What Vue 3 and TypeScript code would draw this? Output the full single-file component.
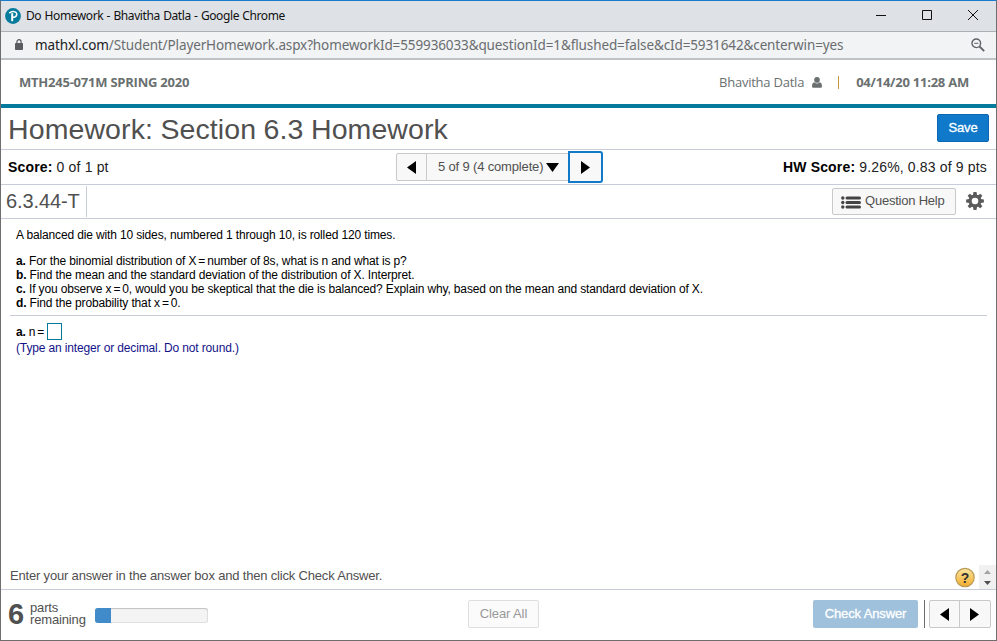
<script setup lang="ts">
import { ref } from 'vue'

interface QuestionPart {
  label: string
  text: string
}

const address = {
  host: 'mathxl.com',
  path: '/Student/PlayerHomework.aspx?homeworkId=559936033&questionId=1&flushed=false&cId=5931642&centerwin=yes',
}

const parts: QuestionPart[] = [
  { label: 'a.', text: 'For the binomial distribution of X = number of 8s, what is n and what is p?' },
  { label: 'b.', text: 'Find the mean and the standard deviation of the distribution of X. Interpret.' },
  { label: 'c.', text: 'If you observe x = 0, would you be skeptical that the die is balanced? Explain why, based on the mean and standard deviation of X.' },
  { label: 'd.', text: 'Find the probability that x = 0.' },
]

// Splits a sentence around " = " so the equals sign can be set tighter.
const segments = (text: string): string[] => text.split(/( = )/)

const answer = ref('')
const progress = 14
const teeth = [0, 45, 90, 135, 180, 225, 270, 315]
</script>

<template>
  <div class="window">
    <header class="titlebar">
      <svg class="logo" viewBox="0 0 16 16">
        <circle cx="8" cy="8" r="7.900" fill="#047a9c" />
        <path d="M4.300 5.200C5.700 3.900 7.700 3.300 9.300 3.700c1.900.400 2.700 1.700 2.400 3.100-.400 1.800-2.200 2.600-4.500 2.500" fill="none" stroke="#fff" stroke-width="1.600" />
        <path d="M7.200 5.200v8" stroke="#fff" stroke-width="2" />
      </svg>
      <span class="caption">Do Homework - Bhavitha Datla - Google Chrome</span>
      <div class="controls">
        <svg viewBox="0 0 12 12"><path d="M1 6.500h10" /></svg>
        <svg viewBox="0 0 12 12"><path d="M1.500 1.500h9v9h-9z" /></svg>
        <svg viewBox="0 0 12 12"><path d="M1 1l10 10M11 1L1 11" /></svg>
      </div>
    </header>

    <div class="address">
      <svg class="lock" viewBox="0 0 8 11">
        <path d="M1.900 5V2.800a2.100 2.100 0 0 1 4.200 0V5" fill="none" stroke="#5a5d60" stroke-width="1.200" />
        <rect x="0" y="4" width="8" height="7" rx="0.800" fill="#5a5d60" />
      </svg>
      <span class="url"><b>{{ address.host }}</b>{{ address.path }}</span>
      <svg class="lens" viewBox="0 0 14 14" fill="none" stroke="#5f6368">
        <circle cx="5.300" cy="5.300" r="4.300" stroke-width="1.400" />
        <path d="M8.500 8.500l4.700 4.700" stroke-width="1.800" />
        <path d="M3.200 5.300h4.200" stroke-width="1" />
      </svg>
    </div>

    <div class="course">
      <strong class="course-name">MTH245-071M SPRING 2020</strong>
      <span class="user">Bhavitha Datla</span>
      <svg class="person" viewBox="0 0 10 11">
        <circle cx="5" cy="2.900" r="2.800" />
        <path d="M0 9.500C0 7 .7 5.600 2.300 5.200a3.900 3.900 0 0 0 5.400 0C9.300 5.600 10 7 10 9.500q0 1.300-1.300 1.300H1.300Q0 10.800 0 9.500z" />
      </svg>
      <i class="divider"></i>
      <strong class="date">04/14/20 11:28 AM</strong>
    </div>

    <div class="heading">
      <h1>Homework: Section 6.3 Homework</h1>
      <button class="save">Save</button>
    </div>

    <div class="score">
      <span class="score-left"><b>Score:</b> 0 of 1 pt</span>
      <div class="pager">
        <button class="prev"><svg viewBox="0 0 9 13"><path d="M9 0v13L0 6.500z" /></svg></button>
        <button class="pick"><span>5 of 9 (4 complete)</span><svg viewBox="0 0 13 9"><path d="M0 0h13L6.500 9z" /></svg></button>
        <button class="next"><svg viewBox="0 0 9 13"><path d="M0 0v13l9-6.500z" /></svg></button>
      </div>
      <span class="score-right"><b>HW Score:</b> 9.26%, 0.83 of 9 pts</span>
    </div>

    <div class="toolbar">
      <span class="number">6.3.44-T</span>
      <button class="help">
        <svg viewBox="0 0 20 13" fill="#444">
          <g v-for="y in [2, 6.5, 11]" :key="y">
            <circle cx="1.800" :cy="y" r="1.700" />
            <rect x="4.500" :y="y - 1.600" width="15.500" height="3.200" rx="1.500" />
          </g>
        </svg>
        <span>Question Help</span>
      </button>
      <svg class="gear" viewBox="-9 -9 18 18">
        <path v-for="angle in teeth" :key="angle" :transform="`rotate(${angle})`" d="M-2.100-5.500L-1.500-8.900H1.500L2.100-5.500z" fill="#5b5b5b" />
        <circle r="4.900" fill="none" stroke="#5b5b5b" stroke-width="3.200" />
      </svg>
    </div>

    <main class="question">
      <p class="intro">A balanced die with 10 sides, numbered 1 through 10, is rolled 120 times.</p>
      <p v-for="part in parts" :key="part.label"><b>{{ part.label }}</b> <span v-for="(segment, i) in segments(part.text)" :key="i" :class="{ equals: segment === ' = ' }">{{ segment }}</span></p>
      <hr />
      <label class="entry"><b>a.</b><span>n<span class="equals"> =</span></span><input v-model="answer" /></label>
      <p class="note">(Type an integer or decimal. Do not round.)</p>
    </main>

    <div class="hint">
      <span>Enter your answer in the answer box and then click Check Answer.</span>
      <svg class="qmark" viewBox="0 0 20 21">
        <defs>
          <linearGradient id="gold" x1="0" y1="0" x2="0" y2="1">
            <stop offset="0" stop-color="#fbe7a0" />
            <stop offset="1" stop-color="#f2ac2c" />
          </linearGradient>
        </defs>
        <circle cx="10" cy="10.500" r="9.200" fill="url(#gold)" stroke="#b99a55" stroke-width="1.200" />
        <text x="10" y="15.500" text-anchor="middle">?</text>
      </svg>
      <div class="scroll">
        <svg viewBox="0 0 7 4"><path d="M0 4h7L3.500 0z" fill="#a3a3a3" /></svg>
        <svg viewBox="0 0 7 4"><path d="M0 0h7L3.500 4z" fill="#505050" /></svg>
      </div>
    </div>

    <footer class="footer">
      <strong class="count">6</strong>
      <span class="remaining">parts<br />remaining</span>
      <div class="progress"><div :style="{ width: progress + '%' }"></div></div>
      <button class="clear">Clear All</button>
      <button class="check">Check Answer</button>
      <i class="bar"></i>
      <div class="steps">
        <button><svg viewBox="0 0 9 13"><path d="M9 0v13L0 6.500z" /></svg></button>
        <button><svg viewBox="0 0 9 13"><path d="M0 0v13l9-6.500z" /></svg></button>
      </div>
    </footer>
  </div>
</template>

<style>
body {
  margin: 0;
  background: #fff;
}
</style>

<style scoped>
* {
  box-sizing: border-box;
}
.window {
  width: 997px;
  height: 641px;
  display: flex;
  flex-direction: column;
  border: 1px solid #6e6e6e;
  border-top-color: #1a7bcd;
  background: #fff;
  font-family: "Liberation Sans", Arial, sans-serif;
  white-space: nowrap;
  overflow: hidden;
}
button {
  display: flex;
  align-items: center;
  justify-content: center;
  padding: 0 0 1px;
  border: 1px solid #c9c9c9;
  background: #f8f8f8;
  font-family: inherit;
  font-size: 13px;
  letter-spacing: -0.12px;
}
svg {
  display: block;
  flex: none;
}
.titlebar {
  height: 31px;
  flex: none;
  display: flex;
  align-items: center;
  padding: 0 17px 0 4px;
  background: #dee1e6;
  border-bottom: 1px solid #adb0b3;
}
.logo {
  width: 16px;
  height: 16px;
  margin-bottom: 1px;
}
.caption {
  margin-left: 5px;
  font: 12px/20px "Noto Sans", sans-serif;
  letter-spacing: -0.4px;
  word-spacing: 0.6px;
  color: #111;
}
.controls {
  margin-left: auto;
  padding-bottom: 2px;
  display: flex;
  gap: 34px;
}
.controls svg {
  width: 12px;
  height: 12px;
  fill: none;
  stroke: #111;
}
.address {
  height: 28px;
  flex: none;
  display: flex;
  align-items: center;
  padding: 0 11px 0 14px;
  background: #f1f3f4;
  border-bottom: 2px solid #bfc1c3;
}
.lock {
  width: 8px;
  height: 11px;
  margin-bottom: 1px;
}
.url {
  margin-left: 12px;
  font: 13.5px/20px "Noto Sans", sans-serif;
  letter-spacing: -0.117px;
  color: #6a6d70;
}
.url b {
  font-weight: 400;
  color: #202124;
}
.lens {
  width: 14px;
  height: 14px;
  margin-left: auto;
}
.course {
  height: 48px;
  flex: none;
  display: flex;
  align-items: center;
  padding: 0 27px 0 18px;
  border-bottom: 4px solid #047a9c;
  font: 13px/20px "Open Sans", sans-serif;
  letter-spacing: -0.23px;
  color: #6a7070;
}
.user {
  margin-left: auto;
}
.person {
  width: 10px;
  height: 11px;
  margin-left: 8px;
  fill: #6a7070;
}
.divider {
  width: 1px;
  height: 13px;
  margin: 0 17px 0 16px;
  background: #c8963c;
}
.heading {
  height: 42px;
  flex: none;
  display: flex;
  align-items: center;
  justify-content: space-between;
  padding: 0 7px 2px;
  border-bottom: 1px solid #c8ccd8;
}
h1 {
  margin: 2px 0 0;
  font-size: 28.5px;
  line-height: 40px;
  letter-spacing: 0.1px;
  word-spacing: -0.6px;
  font-weight: 400;
  color: #505050;
}
.save {
  width: 52px;
  height: 28px;
  border-color: #0c67b0;
  border-radius: 2px;
  background: #1179ca;
  color: #fff;
  -webkit-text-stroke: 0.3px #fff;
}
.score {
  height: 35px;
  flex: none;
  display: grid;
  grid-template-columns: 395px 207px 1fr;
  align-items: center;
  padding: 0 9px 0 0;
  border-bottom: 1px solid #c8ccd8;
  font-size: 14px;
  letter-spacing: 0.16px;
  color: #222;
}
.score b {
  color: #000;
}
.score-left {
  padding-left: 7px;
}
.score-right {
  text-align: right;
}
.pager {
  display: flex;
  align-items: center;
}
.pager svg,
.steps svg {
  width: 9px;
  height: 13px;
}
.prev {
  width: 31px;
  height: 28px;
  padding: 1px 1px 0 0;
  border-radius: 2px 0 0 2px;
}
.pick {
  width: 141px;
  height: 28px;
  justify-content: flex-start;
  padding-left: 11px;
  gap: 3px;
  border-width: 1px 0;
  letter-spacing: -0.16px;
  color: #505050;
}
.pick svg {
  width: 13px;
  height: 9px;
  margin-top: 1px;
  fill: #000;
}
.next {
  width: 35px;
  height: 32px;
  padding: 1px 0 0;
  border: 2px solid #1179ca;
  border-radius: 0 3px 3px 0;
}
.toolbar {
  height: 34px;
  flex: none;
  display: flex;
  align-items: center;
  padding-right: 12px;
  border-bottom: 1px solid #c8ccd8;
}
.number {
  width: 86px;
  height: 31px;
  padding-left: 5px;
  border-right: 1px solid #c8ccd8;
  font-size: 20px;
  line-height: 30px;
  letter-spacing: -0.1px;
  color: #505050;
}
.help {
  width: 124px;
  height: 27px;
  margin-left: auto;
  justify-content: flex-start;
  gap: 4px;
  padding: 0 0 0 8px;
  border-radius: 2px;
  letter-spacing: -0.22px;
  color: #505050;
}
.help svg {
  width: 20px;
  height: 13px;
  margin-top: 1px;
}
.help span {
  margin-bottom: 2px;
}
.gear {
  width: 18px;
  height: 18px;
  margin: 0 0 1px 10px;
}
.question {
  flex: 1;
  padding: 9px 9px 0;
  font-size: 12px;
  line-height: 14px;
  letter-spacing: -0.14px;
  color: #000;
}
.question p {
  margin: 0;
  padding-left: 6px;
}
.question .intro {
  margin-bottom: 12px;
}
.question p span {
  white-space: pre;
}
.equals {
  word-spacing: -1.2px;
}
hr {
  height: 1px;
  margin: 5px 0 7px;
  border: 0;
  background: #c8ccd8;
}
.entry {
  display: flex;
  align-items: center;
  height: 17px;
  padding-left: 6px;
}
.entry > span {
  margin-left: 3px;
}
.entry input {
  width: 15px;
  height: 17px;
  margin-left: 3px;
  padding: 0;
  border: 1px solid #047a9c;
  border-radius: 0;
}
.question .note {
  margin-top: 1px;
  color: #131389;
}
.hint {
  height: 25px;
  flex: none;
  display: flex;
  padding-left: 9px;
  border-bottom: 1px solid #c8ccd8;
  font-size: 13px;
  line-height: 22px;
  letter-spacing: -0.18px;
  color: #505050;
}
.qmark {
  width: 20px;
  height: 21px;
  margin: 2px 4px 0 auto;
}
.qmark text {
  font: bold 14px "Liberation Sans", sans-serif;
  fill: #333;
}
.scroll {
  width: 17px;
  display: flex;
  flex-direction: column;
  align-items: center;
  gap: 7px;
  padding-top: 5px;
  background: #f1f1f1;
}
.scroll svg {
  width: 7px;
  height: 4px;
}
.footer {
  height: 50px;
  flex: none;
  display: flex;
  align-items: center;
  padding: 0 5px 2px 7px;
}
.count {
  width: 22px;
  font-size: 29px;
  line-height: 30px;
  letter-spacing: -1px;
  color: #505050;
}
.remaining {
  width: 65px;
  font-size: 13px;
  line-height: 12px;
  letter-spacing: -0.15px;
  color: #505050;
}
.progress {
  width: 113px;
  height: 15px;
  margin-top: 3px;
  overflow: hidden;
  border-radius: 3px;
  background: #f4f4f4;
  box-shadow: inset 0 1px 1px #c4c4c4, inset 0 0 0 1px #e0e0e0;
}
.progress div {
  height: 100%;
  background: #428bca;
}
.clear {
  width: 71px;
  height: 28px;
  margin-left: 260px;
  border-color: #dfdfdf;
  border-radius: 2px;
  background: #fbfbfb;
  color: #999;
}
.check {
  width: 105px;
  height: 28px;
  margin-left: auto;
  border: 0;
  border-radius: 2px;
  background: #a0c1dc;
  color: #fff;
  -webkit-text-stroke: 0.3px #fff;
}
.bar {
  width: 1px;
  height: 28px;
  margin: 0 4px 0 6px;
  background: #6e6e6e;
}
.steps {
  display: flex;
}
.steps button {
  width: 32px;
  height: 28px;
  padding: 1px 1px 0 0;
  border-radius: 0 2px 2px 0;
}
.steps button:first-child {
  width: 31px;
  margin-right: -1px;
  border-radius: 2px 0 0 2px;
}
</style>
